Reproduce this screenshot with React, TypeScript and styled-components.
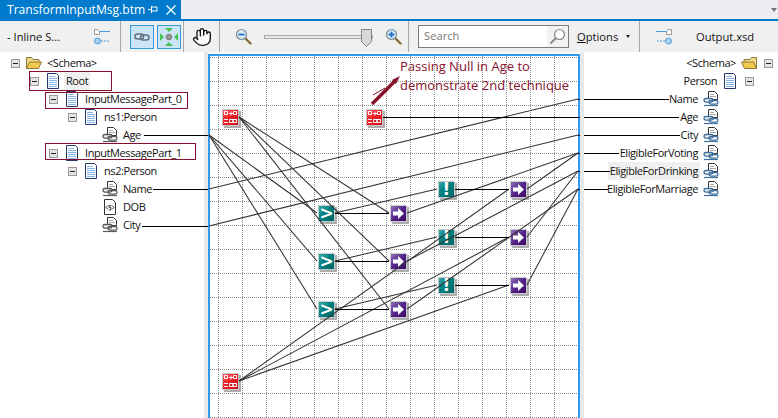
import React from "react";
import styled, { createGlobalStyle } from "styled-components";
import { Hand } from "lucide-react";

const GlobalStyle = createGlobalStyle`
  html, body {
    margin: 0;
    padding: 0;
    background: #fff;
  }
  body {
    font-family: "Open Sans", "Liberation Sans", sans-serif;
    font-size: 11.2px;
    color: #111;
  }
`;

const CANVAS_X = 210;
const CANVAS_Y = 56;
const crimson = "#85102c";

type Kind = "red" | "teal" | "purple";

const functoids: { kind: Kind; x: number; y: number; glyph?: string }[] = [
  { kind: "red", x: 222, y: 109 },
  { kind: "red", x: 366, y: 109 },
  { kind: "red", x: 222, y: 373 },
  { kind: "teal", x: 318, y: 205, glyph: ">" },
  { kind: "teal", x: 318, y: 253, glyph: ">" },
  { kind: "teal", x: 318, y: 301, glyph: ">" },
  { kind: "purple", x: 390, y: 205 },
  { kind: "purple", x: 390, y: 253 },
  { kind: "purple", x: 390, y: 301 },
  { kind: "teal", x: 438, y: 181, glyph: "!" },
  { kind: "teal", x: 438, y: 229, glyph: "!" },
  { kind: "teal", x: 438, y: 277, glyph: "!" },
  { kind: "purple", x: 510, y: 181 },
  { kind: "purple", x: 510, y: 229 },
  { kind: "purple", x: 510, y: 277 },
];

// thin links, all run across the grid at an angle
const slanted: number[][] = [
  [209, 135, 317, 213],
  [209, 135, 317, 261],
  [209, 135, 317, 309],
  [209, 189, 578, 99],
  [209, 226, 578, 135],
  [239, 117, 389, 213],
  [239, 117, 389, 261],
  [239, 117, 389, 309],
  [335, 213, 437, 189],
  [335, 261, 437, 237],
  [335, 309, 437, 285],
  [407, 213, 578, 153],
  [407, 261, 578, 171],
  [407, 309, 578, 189],
  [527, 189, 578, 153],
  [527, 237, 578, 171],
  [527, 285, 578, 189],
  [239, 381, 509, 189],
  [239, 381, 509, 237],
  [239, 381, 509, 285],
];

// straight black links, [x1, x2, y]
const level: number[][] = [
  [144, 208, 135],
  [153, 208, 189],
  [142, 208, 226],
  [383, 578, 117],
  [335, 389, 213],
  [335, 389, 261],
  [335, 389, 309],
  [455, 509, 189],
  [455, 509, 237],
  [455, 509, 285],
  [584, 669, 99],
  [584, 679, 117],
  [584, 680, 135],
  [584, 619, 153],
  [584, 610, 171],
  [584, 608, 189],
  [578, 580, 99],
  [578, 580, 117],
  [578, 580, 135],
  [578, 580, 153],
  [578, 580, 171],
  [578, 580, 189],
];

const leftRows = [
  { label: "<Schema>", depth: 0, icon: "folder", open: true },
  { label: "Root", depth: 1, icon: "doc", open: true, hot: true },
  { label: "InputMessagePart_0", depth: 2, icon: "doc", open: true },
  { label: "ns1:Person", depth: 3, icon: "doc", open: true },
  { label: "Age", depth: 4, icon: "field" },
  { label: "InputMessagePart_1", depth: 2, icon: "doc", open: true },
  { label: "ns2:Person", depth: 3, icon: "doc", open: true },
  { label: "Name", depth: 4, icon: "field" },
  { label: "DOB", depth: 4, icon: "attr" },
  { label: "City", depth: 4, icon: "field" },
];

const rightRows = [
  { label: "<Schema>", depth: 0, icon: "folder", open: true },
  { label: "Person", depth: 1, icon: "doc", open: true },
  { label: "Name", depth: 2, icon: "field" },
  { label: "Age", depth: 2, icon: "field" },
  { label: "City", depth: 2, icon: "field" },
  { label: "EligibleForVoting", depth: 2, icon: "field" },
  { label: "EligibleForDrinking", depth: 2, icon: "field", hot: true },
  { label: "EligibleForMarriage", depth: 2, icon: "field" },
];

const DocIcon = () => (
  <svg width="16" height="16" viewBox="0 0 16 16">
    <path d="M2.5 .5h9l2 2v13h-11z" fill="#fff" stroke="#27346e" />
    <path d="M4 3.5h6M4 5.5h8M4 7.5h8M4 9.5h8M4 11.5h8M4 13.5h8" stroke="#86b4e6" />
  </svg>
);

const FieldIcon = ({ tint }: { tint: string }) => (
  <svg width="16" height="16" viewBox="0 0 16 16">
    <path d="M5.5 .5h6l3 3v5h-9z" fill="#fff" stroke="#333" />
    <path d="M7 3.5h4M7 5.5h6" stroke="#aaa" />
    <rect x="1" y="7.5" width="9" height="3.6" rx="1.8" fill="#eee" stroke={tint} strokeWidth="1.3" />
    <rect x="6" y="9.5" width="9" height="3.6" rx="1.8" fill="none" stroke={tint} strokeWidth="1.3" />
    <path d="M1 14.5h14" stroke={tint} strokeWidth="1.2" />
  </svg>
);

const AttrIcon = () => (
  <svg width="16" height="16" viewBox="0 0 16 16">
    <path d="M2.5 .5h8l3 3v12h-11z" fill="#fff" stroke="#333" />
    <path d="M6 6.5L4 8.5l2 2M10 6.5l2 2-2 2" fill="none" stroke="#333" />
    <path d="M9 6.5H7.2v2h1.6v2.5H7" fill="none" stroke="#333" />
  </svg>
);

const FolderIcon = ({ flip }: { flip?: boolean }) => (
  <svg width="16" height="16" viewBox="0 0 16 16" style={flip ? { transform: "scaleX(-1)" } : undefined}>
    <path d="M.5 13.5v-11h5l1.5 2h6v3" fill="#f4dc86" stroke="#8a7a3a" />
    <path d="M.5 13.5l3-6.5h12l-3 6.5z" fill="#f2c94c" stroke="#8a7a3a" />
  </svg>
);

const TreeIcon = ({ icon, tint }: { icon: string; tint: string }) => {
  if (icon === "folder") return <FolderIcon flip={tint !== "#5a5a5a"} />;
  if (icon === "doc") return <DocIcon />;
  if (icon === "attr") return <AttrIcon />;
  return <FieldIcon tint={tint} />;
};

const SchemaGlyph = ({ flip }: { flip?: boolean }) => (
  <svg width="16" height="16" viewBox="0 0 16 16" style={flip ? { transform: "scaleX(-1)" } : undefined}>
    <path d="M.5 .5h3l2 2v3h-5z" fill="#fff" stroke="#999" />
    <path d="M5 2.5h11" stroke="#4f9bdc" />
    <circle cx="3.5" cy="12" r="3" fill="#a9d3f2" stroke="#4f9bdc" />
    <path d="M7 12h9" stroke="#4f9bdc" strokeDasharray="2 1" />
  </svg>
);

const LinkGlyph = () => (
  <svg width="16" height="8" viewBox="0 0 16 8">
    <rect x="1" y="1" width="8.5" height="5" rx="2.5" fill="none" stroke="#66707c" strokeWidth="1.5" />
    <rect x="6.5" y="2" width="8.5" height="5" rx="2.5" fill="none" stroke="#66707c" strokeWidth="1.5" />
  </svg>
);

const GridGlyph = () => (
  <svg width="20" height="20" viewBox="0 0 20 20">
    <circle cx="10" cy="10" r="2.8" fill="#9a9a9a" stroke="#777" />
    <path d="M6 1h8l-4 4zM6 19h8l-4-4zM1 6v8l4-4zM19 6v8l-4-4z" fill="#4cc04c" />
  </svg>
);

const ZoomGlyph = ({ plus }: { plus?: boolean }) => (
  <svg width="17" height="17" viewBox="0 0 17 17">
    <path d="M10 10l5.5 5.5" stroke="#8a6a3c" strokeWidth="2.4" strokeLinecap="round" />
    <circle cx="6.5" cy="6.5" r="5" fill="#d9ecf8" stroke="#7f8c96" strokeWidth="1.2" />
    <path d={plus ? "M3.5 6.5h6M6.5 3.5v6" : "M3.5 6.5h6"} stroke="#1f6fc4" strokeWidth="1.8" />
  </svg>
);

const SearchGlyph = () => (
  <svg width="17" height="17" viewBox="0 0 17 17">
    <circle cx="10.5" cy="6.5" r="5" fill="#fff" stroke="#8a8a8a" strokeWidth="1.2" />
    <path d="M7 10l-5.5 5.5" stroke="#8a8a8a" strokeWidth="2" />
  </svg>
);

const RedGlyph = () => (
  <svg width="15" height="15" viewBox="0 0 15 15">
    <path d="M1.5 1.5h3v3h-3zM10.5 1.5h3v3h-3zM6.5 9.5h3.5v3H6.5zM10 9.5h3.5v3H10z" fill="none" stroke="#fff" />
    <path d="M6 3.5h4M8 1.5v4M1 9.5h4M1 12.5h4" stroke="#fff" />
  </svg>
);

const ArrowGlyph = () => (
  <svg width="13" height="13" viewBox="0 0 13 13">
    <path d="M1 4.5h5V1l6 5.5-6 5.5V8.5H1z" fill="#fff" />
  </svg>
);

const App = () => {
  return (
    <Page>
      <GlobalStyle />
      <TabStrip>
        <Tab>
          <TabTitle>TransformInputMsg.btm</TabTitle>
          <svg width="10" height="9" viewBox="0 0 10 9">
            <path d="M0 4.5h3M3.5 1v7M3.5 2h5.5v4H3.5" fill="none" stroke="#fff" />
          </svg>
          <svg width="10" height="10" viewBox="0 0 10 10">
            <path d="M.5 .5l9 9M9.5 .5l-9 9" stroke="#fff" strokeWidth="1.3" />
          </svg>
        </Tab>
        <StripCaret />
      </TabStrip>
      <AccentBar />
      <Toolbar>
        <ToolSection $width={121} $pad="0 10px 0 7px" $justify="space-between">
          <span>- Inline S...</span>
          <SchemaGlyph />
        </ToolSection>
        <ToolSection $width={63} $pad="0 0 0 9px" $gap={3}>
          <Toggle><LinkGlyph /></Toggle>
          <Toggle><GridGlyph /></Toggle>
        </ToolSection>
        <ToolSection $width={36} $pad="0" $justify="center">
          <Hand size={20} fill="#fff" color="#111" strokeWidth={1.6} />
        </ToolSection>
        <ToolSection $width={189} $pad="0 0 0 15px" $gap={12}>
          <ZoomGlyph />
          <Slider>
            <SliderThumb width="11" height="18" viewBox="0 0 11 18">
              <path d="M.5 .5h10v12l-5 5-5-5z" fill="#d8d8d8" stroke="#858585" />
            </SliderThumb>
          </Slider>
          <ZoomGlyph plus />
        </ToolSection>
        <ToolSection $width={231} $pad="0 0 0 9px" $gap={8}>
          <SearchBox>
            <SearchText>Search</SearchText>
            <SearchButton><SearchGlyph /></SearchButton>
          </SearchBox>
          <span><u>O</u>ptions</span>
          <OptionsCaret />
        </ToolSection>
        <ToolSection $width={138} $pad="0 0 0 16px" $gap={24}>
          <SchemaGlyph flip />
          <span>Output.xsd</span>
        </ToolSection>
      </Toolbar>
      <Main>
        <LeftTree>
          {leftRows.map((row) => (
            <LeftRow key={row.label} $depth={row.depth}>
              <Slot>{row.open && <Expander />}</Slot>
              <IconBox><TreeIcon icon={row.icon} tint="#5a5a5a" /></IconBox>
              <Label $hot={row.hot}>{row.label}</Label>
            </LeftRow>
          ))}
        </LeftTree>
        <Gutter />
        <Canvas>
          <CanvasGrid width="368" height="362">
            {Array.from({ length: 16 }, (_, i) => (
              <line key={"v" + i} x1={8.5 + i * 24} x2={8.5 + i * 24} y1="0" y2="362" />
            ))}
            {Array.from({ length: 16 }, (_, i) => (
              <line key={"h" + i} y1={1.5 + i * 24} y2={1.5 + i * 24} x1="0" x2="368" />
            ))}
          </CanvasGrid>
          {functoids.map((f, i) => (
            <Functoid key={i} $kind={f.kind} $left={f.x - CANVAS_X} $top={f.y - CANVAS_Y}>
              {f.kind === "red" && <RedGlyph />}
              {f.kind === "purple" && <ArrowGlyph />}
              {f.glyph}
            </Functoid>
          ))}
          <Note>
            Passing Null in Age to
            <br />
            demonstrate 2nd technique
          </Note>
        </Canvas>
        <Gutter />
        <RightTree>
          {rightRows.map((row) => (
            <RightRow key={row.label + row.depth} $depth={row.depth}>
              <Label $hot={row.hot}>{row.label}</Label>
              <IconBox><TreeIcon icon={row.icon} tint="#3f6f9f" /></IconBox>
              <RightSlot>{row.open && <Expander />}</RightSlot>
            </RightRow>
          ))}
        </RightTree>
      </Main>
      <Callout $left={29} $top={71} $width={83} $height={20} />
      <Callout $left={45} $top={92} $width={143} $height={17} />
      <Callout $left={45} $top={143} $width={151} $height={17} />
      <LinkLayer width="778" height="418">
        {slanted.map((l, i) => (
          <line key={i} x1={l[0]} y1={l[1]} x2={l[2]} y2={l[3]} stroke="#333" strokeWidth="1.05" />
        ))}
        {level.map((l, i) => (
          <line key={i} x1={l[0]} x2={l[1]} y1={l[2] + 0.5} y2={l[2] + 0.5} stroke="#000" />
        ))}
        <line x1="372" y1="104" x2="396" y2="80" stroke={crimson} strokeWidth="3.4" />
        <path d="M392 80l8-4-4 8z" fill={crimson} />
        <line x1="373" y1="95" x2="385" y2="88" stroke={crimson} />
      </LinkLayer>
    </Page>
  );
};

export default App;

const Page = styled.div`
  position: relative;
  width: 778px;
  height: 418px;
  overflow: hidden;
  display: flex;
  flex-direction: column;
  background: #fff;
`;
const TabStrip = styled.div`
  height: 19px;
  flex: none;
  display: flex;
  align-items: center;
  justify-content: space-between;
  background: #eeeef2;
`;
const Tab = styled.div`
  width: 181px;
  height: 19px;
  box-sizing: border-box;
  padding-left: 7px;
  display: flex;
  align-items: center;
  background: #007acc;
  color: #fff;
  svg {
    flex: none;
  }
  svg:first-of-type {
    margin-left: 10px;
  }
  svg:last-of-type {
    margin-left: 8px;
  }
`;
const TabTitle = styled.span`
  width: 131px;
  flex: none;
  font-size: 12.1px;
  white-space: nowrap;
`;
const StripCaret = styled.div`
  width: 0;
  height: 0;
  margin-right: 1px;
  border-left: 3.5px solid transparent;
  border-right: 3.5px solid transparent;
  border-top: 4px solid #777;
`;
const AccentBar = styled.div`
  height: 2px;
  flex: none;
  background: #007acc;
`;
const Toolbar = styled.div`
  height: 31px;
  flex: none;
  display: flex;
  background: #f0f0f0;
`;
const ToolSection = styled.div<{ $width: number; $pad: string; $gap?: number; $justify?: string }>`
  width: ${(props) => props.$width}px;
  padding: ${(props) => props.$pad};
  box-sizing: border-box;
  flex: none;
  display: flex;
  align-items: center;
  gap: ${(props) => props.$gap || 0}px;
  justify-content: ${(props) => props.$justify || "flex-start"};
  border-right: 1px solid #a8a8a8;
  white-space: nowrap;
  &:last-child {
    border-right: none;
  }
`;
const Toggle = styled.div`
  width: 24px;
  height: 24px;
  box-sizing: border-box;
  display: flex;
  align-items: center;
  justify-content: center;
  background: #cbe4f8;
  border: 1px solid #3399dd;
`;
const Slider = styled.div`
  position: relative;
  width: 109px;
  height: 4px;
  background: #e6e6e6;
  border: 1px solid #aaa;
  box-sizing: border-box;
`;
const SliderThumb = styled.svg`
  position: absolute;
  right: 0;
  top: -7px;
`;
const SearchBox = styled.div`
  width: 151px;
  height: 23px;
  box-sizing: border-box;
  display: flex;
  align-items: stretch;
  justify-content: space-between;
  background: #fff;
  border: 1px solid #7a7a7a;
`;
const SearchText = styled.span`
  padding-left: 5px;
  line-height: 20px;
  color: #777;
`;
const SearchButton = styled.div`
  width: 21px;
  display: flex;
  align-items: center;
  justify-content: center;
  background: #f2f2f2;
`;
const OptionsCaret = styled.div`
  width: 0;
  height: 0;
  border-left: 2.5px solid transparent;
  border-right: 2.5px solid transparent;
  border-top: 3px solid #222;
`;
const Main = styled.div`
  flex: 1;
  min-height: 0;
  display: flex;
`;
const LeftTree = styled.div`
  width: 204px;
  flex: none;
  padding-top: 2px;
  box-sizing: border-box;
`;
const RightTree = styled.div`
  flex: 1;
  min-width: 0;
  padding-top: 2px;
  box-sizing: border-box;
`;
const Gutter = styled.div`
  width: 4px;
  flex: none;
  background: #e8e8e8;
`;
const LeftRow = styled.div<{ $depth: number }>`
  height: 18px;
  display: flex;
  align-items: center;
  padding-left: ${(props) => 11 + props.$depth * 19}px;
  white-space: nowrap;
`;
const RightRow = styled.div<{ $depth: number }>`
  height: 18px;
  display: flex;
  align-items: center;
  justify-content: flex-end;
  padding-right: ${(props) => 5 + props.$depth * 19}px;
  white-space: nowrap;
`;
const Slot = styled.div`
  width: 15px;
  flex: none;
  display: flex;
`;
const RightSlot = styled.div`
  width: 16px;
  flex: none;
  display: flex;
  justify-content: flex-end;
`;
const Expander = styled.div`
  position: relative;
  width: 9px;
  height: 9px;
  box-sizing: border-box;
  background: #e4e4e4;
  border: 1px solid #9a9a9a;
  &::after {
    content: "";
    position: absolute;
    left: 1px;
    right: 1px;
    top: 3px;
    height: 1px;
    background: #222;
  }
`;
const IconBox = styled.div`
  width: 16px;
  height: 16px;
  flex: none;
`;
const Label = styled.span<{ $hot?: boolean }>`
  margin: 0 3px;
  padding: 0 2px;
  font-size: 11px;
  line-height: 18px;
  letter-spacing: -0.42px;
  background: ${(props) => (props.$hot ? "#f0f0f0" : "transparent")};
`;
const Canvas = styled.div`
  position: relative;
  width: 368px;
  flex: none;
  margin-top: 2px;
  background: #fff;
  border-top: 2px solid #3399ee;
  border-left: 2px solid #3399ee;
  border-right: 2px solid #3399ee;
`;
const CanvasGrid = styled.svg`
  position: absolute;
  left: 0;
  top: 0;
  line {
    stroke: #8c8c8c;
    stroke-dasharray: 1 1;
    shape-rendering: crispEdges;
  }
`;
const kindFill = {
  red: "linear-gradient(135deg, #ff5a5a 0%, #ee1c25 45%, #c80f18 100%)",
  teal: "linear-gradient(135deg, #3aa6a6 0%, #008080 45%, #006666 100%)",
  purple: "linear-gradient(135deg, #8f73b8 0%, #55228a 50%, #3a0a66 100%)",
};
const Functoid = styled.div<{ $kind: Kind; $left: number; $top: number }>`
  position: absolute;
  left: ${(props) => props.$left}px;
  top: ${(props) => props.$top}px;
  width: 17px;
  height: 17px;
  box-sizing: border-box;
  display: flex;
  align-items: center;
  justify-content: center;
  background: ${(props) => kindFill[props.$kind]};
  border: 1px solid #c9c9c9;
  box-shadow: 2px 2px 0 #aeaeae;
  color: #fff;
  font-family: "DejaVu Sans", sans-serif;
  font-weight: 700;
  font-size: 17px;
  line-height: 15px;
`;
const Note = styled.div`
  position: absolute;
  left: 190px;
  top: 1px;
  color: ${crimson};
  font-size: 13px;
  line-height: 19px;
  white-space: nowrap;
`;
const Callout = styled.div<{ $left: number; $top: number; $width: number; $height: number }>`
  position: absolute;
  left: ${(props) => props.$left}px;
  top: ${(props) => props.$top}px;
  width: ${(props) => props.$width}px;
  height: ${(props) => props.$height}px;
  box-sizing: border-box;
  border: 1px solid ${crimson};
`;
const LinkLayer = styled.svg`
  position: absolute;
  left: 0;
  top: 0;
  pointer-events: none;
`;
